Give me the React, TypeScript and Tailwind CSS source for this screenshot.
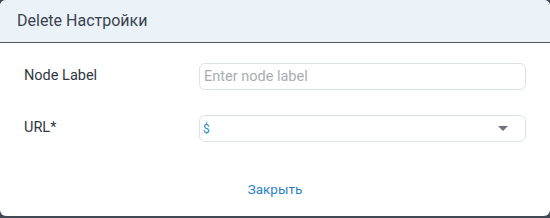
export default function App() {
  return (
    <div className="h-[218px] w-[550px] bg-[#3f4853] font-['Roboto',sans-serif]">
      <div className="flex h-[216px] w-[550px] flex-col overflow-hidden rounded-[6px] bg-white">
        <div className="flex h-[43px] shrink-0 items-center border-b border-[#4a5361] bg-[#ebf3f8] pl-[17px]">
          <h2 className="text-[16px] leading-none text-[#3a4250]">Delete Настройки</h2>
        </div>

        <div className="flex flex-col gap-[25px] pt-[20px] pl-[24px] pr-[24px]">
          <div className="flex items-center">
            <label className="w-[175px] text-[14.5px] leading-none text-[#303743]">Node Label</label>
            <input
              className="h-[27px] flex-1 rounded-[6px] border border-[#dbe2ec] px-[4px] text-[14.5px] outline-none placeholder:text-[#a9aeb5]"
              placeholder="Enter node label"
            />
          </div>
          <div className="flex items-center">
            <label className="w-[175px] text-[14.5px] leading-none text-[#303743]">URL*</label>
            <div className="flex h-[27px] flex-1 items-center justify-between rounded-[6px] border border-[#dbe2ec] pl-[3px] pr-[17px]">
              <span className="text-[12px] text-[#2f87d0]">$</span>
              <svg width="10" height="6" viewBox="0 0 10 6">
                <path d="M0 0h10L5 5z" fill="#6d727c" />
              </svg>
            </div>
          </div>
        </div>

        <div className="flex flex-1 items-center justify-center pt-[22px]">
          <button className="text-[13.5px] leading-none text-[#2b83c9]">Закрыть</button>
        </div>
      </div>
    </div>
  );
}
